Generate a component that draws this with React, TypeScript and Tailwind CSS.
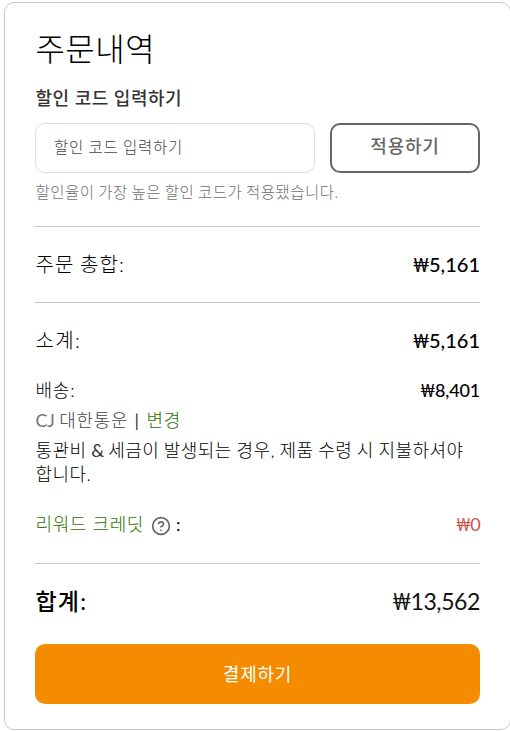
import { CircleHelp } from 'lucide-react';

type PriceProps = {
  value: string;
  className?: string;
};

function Price({ value, className = '' }: PriceProps) {
  return (
    <span className={className}>
      <span className="inline-block origin-right scale-x-[0.78]">₩</span>
      {value}
    </span>
  );
}

export default function App() {
  return (
    <main className="h-[731px] w-[510px] overflow-hidden bg-white pt-[2px] pl-1 font-['Lato','Noto_Sans_CJK_KR',sans-serif] text-black">
      <section className="h-[728px] w-[507px] rounded-[10px] border border-[#c8c8c8] px-[30px]">
        <h1 className="mt-[26px] h-[40px] pl-[0.4px] text-[32px] leading-[40px] font-light tracking-[0.5px]">주문내역</h1>
        <h2 className="mt-[17px] h-6 pl-[0.5px] text-[18px] leading-6 font-medium tracking-[0.5px] text-[#333]">
          할인 코드 입력하기
        </h2>

        <form className="mt-[13px] flex gap-[15px]">
          <input
            className="h-[50px] w-[280px] rounded-[10px] border border-[#ddd] px-[18px] pb-[2px] text-[15.5px] font-light tracking-[0.75px] [word-spacing:-0.5px] placeholder:text-[#444]"
            placeholder="할인 코드 입력하기"
          />
          <button
            type="button"
            className="h-[50px] w-[150px] rounded-[10px] border-2 border-[#666] pb-[5px] text-[18px] leading-6 font-medium tracking-[0.8px] text-[#666]"
          >
            적용하기
          </button>
        </form>
        <p className="mt-2 h-[22px] pl-[0.5px] text-[15.5px] leading-[22px] font-light tracking-[0.5px] [word-spacing:-1px] whitespace-nowrap text-[#707070]">
          할인율이 가장 높은 할인 코드가 적용됐습니다.
        </p>

        <div className="mt-[23px] flex h-[77px] items-center justify-between border-y border-[#c8c8c8] pb-px text-[20px]">
          <span className="pl-[0.5px] font-light tracking-[1.1px] [word-spacing:-1px]">주문 총합:</span>
          <Price value="5,161" className="font-medium" />
        </div>

        <div className="mt-[25px] flex h-6 items-center justify-between text-[20px]">
          <span className="pl-[0.5px] font-light tracking-[1.3px]">소계:</span>
          <Price value="5,161" className="font-medium" />
        </div>
        <div className="mt-[26px] flex h-6 items-center justify-between text-[18px]">
          <span className="pl-[0.5px] font-light tracking-[0.8px]">배송:</span>
          <Price value="8,401" className="font-medium tracking-[-0.2px]" />
        </div>
        <div className="mt-[6px] h-6 pl-[0.5px] text-[18px] leading-6 font-light tracking-[0.7px]">
          <span className="text-[#444] [word-spacing:-1px]">
            <span className="font-normal tracking-[-0.2px] text-[#777]">CJ</span> 대한통운
          </span>
          <span className="mr-[7px] ml-[6px] font-normal text-[#333]">|</span>
          <a className="text-[#2d7000]">변경</a>
        </div>
        <p className="mt-[6px] h-12 pl-[0.5px] text-[18px] leading-6 font-light tracking-[0.45px] [word-spacing:-0.7px] whitespace-nowrap">
          통관비 <span className="font-normal tracking-[-0.5px] text-[#333]">&amp;</span> 세금이 발생되는 경우, 제품 수령 시
          지불하셔야
          <br />
          합니다.
        </p>

        <div className="mt-[26px] flex h-6 items-center justify-between text-[18px]">
          <span className="flex items-center pl-[0.5px] font-light tracking-[0.6px]">
            <a className="text-[#2d7000]">리워드 크레딧</a>
            <CircleHelp className="mt-[3px] ml-[7px] size-5 text-[#666]" />
            <span className="ml-[5px] font-normal">:</span>
          </span>
          <Price value="0" className="tracking-[-0.8px] text-[#d0504a]" />
        </div>

        <div className="mt-[27px] flex h-[81px] items-center justify-between border-t border-[#c8c8c8] pb-[5px] text-[23px]">
          <span className="pl-[0.5px] font-medium tracking-[1.2px]">합계:</span>
          <Price value="13,562" className="tracking-[-0.4px] text-[#111]" />
        </div>
        <button
          type="button"
          className="h-[60px] w-full rounded-[10px] bg-[#f58b00] text-[18px] tracking-[0.8px] text-white"
        >
          결제하기
        </button>
      </section>
    </main>
  );
}
